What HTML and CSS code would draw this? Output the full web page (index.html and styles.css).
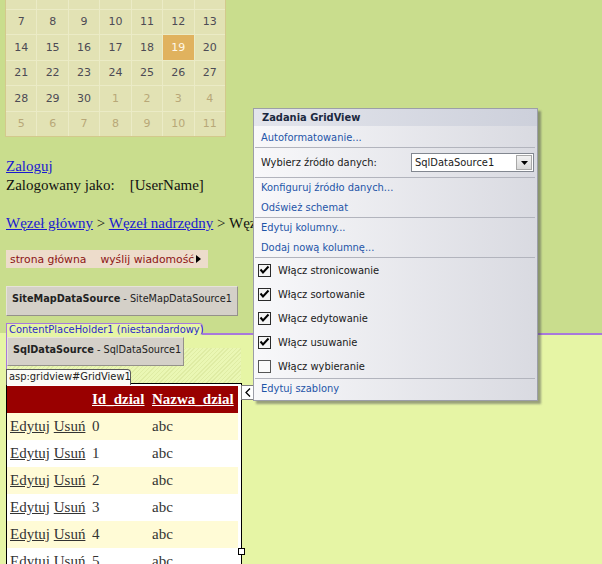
FILE: index.html
```html
<!DOCTYPE html>
<html lang="pl">
<head>
<meta charset="utf-8">
<title>GridView designer</title>
<link rel="stylesheet" href="styles.css">
</head>
<body>
<div class="upper">
  <div class="calendar">
    <div class="cal-grid">
      <span class="d o">31</span><span class="d">1</span><span class="d">2</span><span class="d">3</span><span class="d">4</span><span class="d">5</span><span class="d">6</span>
      <span class="d">7</span><span class="d">8</span><span class="d">9</span><span class="d">10</span><span class="d">11</span><span class="d">12</span><span class="d">13</span>
      <span class="d">14</span><span class="d">15</span><span class="d">16</span><span class="d">17</span><span class="d">18</span><span class="d sel">19</span><span class="d">20</span>
      <span class="d">21</span><span class="d">22</span><span class="d">23</span><span class="d">24</span><span class="d">25</span><span class="d">26</span><span class="d">27</span>
      <span class="d">28</span><span class="d">29</span><span class="d">30</span><span class="d o">1</span><span class="d o">2</span><span class="d o">3</span><span class="d o">4</span>
      <span class="d o">5</span><span class="d o">6</span><span class="d o">7</span><span class="d o">8</span><span class="d o">9</span><span class="d o">10</span><span class="d o">11</span>
    </div>
  </div>
  <div class="login">
    <div><a class="lnk" href="#">Zaloguj</a></div>
    <div class="who"><span>Zalogowany jako:</span><span class="uname">[UserName]</span></div>
  </div>
  <div class="crumbs"><a class="lnk" href="#">Węzeł główny</a> &gt; <a class="lnk" href="#">Węzeł nadrzędny</a> &gt; Węzeł bieżący</div>
  <div class="menu"><span>strona główna</span><span class="m2">wyślij wiadomość</span><span class="m-arrow"></span></div>
  <div class="ctl sitemap"><b>SiteMapDataSource</b> - SiteMapDataSource1</div>
  <div class="cph-tab">ContentPlaceHolder1 (niestandardowy)</div>
</div>
<div class="lower">
  <div class="cph">
    <div class="sql-row">
      <div class="ctl sql"><b>SqlDataSource</b> - SqlDataSource1</div>
      <div class="hatch hatch-fill"></div>
    </div>
    <div class="hatch gv-band"><span class="gv-label">asp:gridview#GridView1</span></div>
    <div class="gv-frame">
      <table class="grid">
        <colgroup><col class="c1"><col class="c2"><col class="c3"></colgroup>
        <thead>
          <tr><th></th><th><a href="#">Id_dzial</a></th><th><a href="#">Nazwa_dzial</a></th></tr>
        </thead>
        <tbody>
          <tr class="alt"><td><a href="#">Edytuj</a> <a href="#">Usuń</a></td><td>0</td><td>abc</td></tr>
          <tr><td><a href="#">Edytuj</a> <a href="#">Usuń</a></td><td>1</td><td>abc</td></tr>
          <tr class="alt"><td><a href="#">Edytuj</a> <a href="#">Usuń</a></td><td>2</td><td>abc</td></tr>
          <tr><td><a href="#">Edytuj</a> <a href="#">Usuń</a></td><td>3</td><td>abc</td></tr>
          <tr class="alt"><td><a href="#">Edytuj</a> <a href="#">Usuń</a></td><td>4</td><td>abc</td></tr>
          <tr><td><a href="#">Edytuj</a> <a href="#">Usuń</a></td><td>5</td><td>abc</td></tr>
        </tbody>
      </table>
    </div>
  </div>
</div>

<div class="smart-tag"><svg width="6" height="9" viewBox="0 0 6 9"><path d="M5 0.5 L1 4.5 L5 8.5" fill="none" stroke="#000" stroke-width="1.3"/></svg></div>
<div class="handle"></div>

<div class="tasks">
  <div class="t-title">Zadania GridView</div>
  <div class="t-item t-first"><a href="#">Autoformatowanie...</a></div>
  <div class="t-sep"></div>
  <div class="t-row">
    <span class="t-label">Wybierz źródło danych:</span>
    <div class="select"><span class="sel-text">SqlDataSource1</span><span class="sel-btn"><svg width="7" height="4" viewBox="0 0 7 4"><path d="M0 0 H7 L3.5 4 Z" fill="#000"/></svg></span></div>
  </div>
  <div class="t-sep"></div>
  <div class="t-item"><a href="#">Konfiguruj źródło danych...</a></div>
  <div class="t-item t-short"><a href="#">Odśwież schemat</a></div>
  <div class="t-sep"></div>
  <div class="t-item"><a href="#">Edytuj kolumny...</a></div>
  <div class="t-item t-short"><a href="#">Dodaj nową kolumnę...</a></div>
  <div class="t-sep"></div>
  <div class="t-check"><svg class="cb" width="13" height="13" viewBox="0 0 13 13"><rect x="0.5" y="0.5" width="12" height="12" fill="#f4f4f4" stroke="#2a2a2a"/><path d="M2.5 5.5 L5 8.5 L10.5 2.5" fill="none" stroke="#000" stroke-width="2"/></svg><span>Włącz stronicowanie</span></div>
  <div class="t-check"><svg class="cb" width="13" height="13" viewBox="0 0 13 13"><rect x="0.5" y="0.5" width="12" height="12" fill="#f4f4f4" stroke="#2a2a2a"/><path d="M2.5 5.5 L5 8.5 L10.5 2.5" fill="none" stroke="#000" stroke-width="2"/></svg><span>Włącz sortowanie</span></div>
  <div class="t-check"><svg class="cb" width="13" height="13" viewBox="0 0 13 13"><rect x="0.5" y="0.5" width="12" height="12" fill="#f4f4f4" stroke="#2a2a2a"/><path d="M2.5 5.5 L5 8.5 L10.5 2.5" fill="none" stroke="#000" stroke-width="2"/></svg><span>Włącz edytowanie</span></div>
  <div class="t-check"><svg class="cb" width="13" height="13" viewBox="0 0 13 13"><rect x="0.5" y="0.5" width="12" height="12" fill="#f4f4f4" stroke="#2a2a2a"/><path d="M2.5 5.5 L5 8.5 L10.5 2.5" fill="none" stroke="#000" stroke-width="2"/></svg><span>Włącz usuwanie</span></div>
  <div class="t-check"><svg class="cb" width="13" height="13" viewBox="0 0 13 13"><rect x="0.5" y="0.5" width="12" height="12" fill="#fafafa" stroke="#555"/></svg><span>Włącz wybieranie</span></div>
  <div class="t-sep"></div>
  <div class="t-item t-last"><a href="#">Edytuj szablony</a></div>
</div>
</body>
</html>
```
FILE: styles.css
```css
* { box-sizing: border-box; }
html, body { margin: 0; padding: 0; }
body {
  width: 602px;
  height: 564px;
  overflow: hidden;
  position: relative;
  background: #e6f5a5;
  font-family: "Liberation Serif", "Times New Roman", serif;
  color: #111;
}

/* ---------- upper (master page) ---------- */
.upper {
  display: flow-root;
  background: #c9dd8d;
}

.calendar {
  margin: -17px 0 0 5px;
  width: 221px;
  border: 1px solid #d3c98c;
  background: #ebebc6;
}
.cal-grid {
  display: grid;
  grid-template-columns: repeat(7, 1fr);
  grid-template-rows: repeat(6, 24.5px);
  gap: 1px;
}
.d {
  background: #e2e2b4;
  display: flex;
  align-items: center;
  justify-content: center;
  font-family: "DejaVu Sans", Verdana, sans-serif;
  font-size: 11px;
  color: #4d4b55;
}
.d.o { color: #b8a878; }
.d.sel { background: #e0b25e; color: #fff8e8; }

.login {
  margin: 20px 0 0 6px;
  font-size: 15px;
  line-height: 19px;
}
.lnk { color: #1a1ad0; text-decoration: underline; }
.who { display: flex; }
.uname { margin-left: 15px; }

.crumbs {
  margin: 19px 0 0 6px;
  width: 247px;
  overflow: hidden;
  font-size: 15px;
  line-height: 19px;
  white-space: nowrap;
}

.menu {
  margin: 17px 0 0 6px;
  width: 202px;
  height: 18px;
  background: #eddccb;
  display: flex;
  align-items: center;
  padding-left: 4px;
  font-family: "DejaVu Sans", Verdana, sans-serif;
  font-size: 10.8px;
  color: #8c1414;
}
.m2 { margin-left: 14px; }
.m-arrow {
  margin-left: 2px;
  width: 0; height: 0;
  border-top: 4px solid transparent;
  border-bottom: 4px solid transparent;
  border-left: 5px solid #000;
}

.ctl {
  background: #d4d0c8;
  border: 1px solid;
  border-color: #e6e2da #94918a #94918a #e6e2da;
  font-family: "DejaVu Sans Condensed", "Liberation Sans", sans-serif;
  font-size: 10.8px;
  color: #222;
  padding: 5px 0 0 5px;
  line-height: 13px;
  white-space: nowrap;
}
.sitemap {
  margin: 18px 0 0 6px;
  width: 232px;
  height: 30px;
}

.cph-tab {
  position: relative;
  z-index: 2;
  margin: 7px 0 -2px 6px;
  width: 197px;
  height: 12px;
  border: 1px solid #a878dc;
  border-bottom: none;
  border-top-right-radius: 4px;
  background: #e6f5a5;
  font-family: "DejaVu Sans Condensed", "Liberation Sans", sans-serif;
  font-size: 11px;
  line-height: 11px;
  color: #2a2ac8;
  padding-left: 2px;
  white-space: nowrap;
}

/* ---------- lower (content placeholder) ---------- */
.lower { padding-left: 6px; }
.cph {
  border-left: 1px solid #a878dc;
  border-top: 2px solid #a878dc;
  height: 240px;
}

.hatch {
  background: repeating-linear-gradient(-45deg, #dfeca4 0 1px, #eaf7b4 1px 3px);
}
.sql-row {
  display: flex;
  width: 234px;
  margin-top: 2px;
}
.sql {
  width: 177px;
  height: 29px;
}
.hatch-fill {
  flex: 1;
  margin-top: 11px;
}
.gv-band {
  width: 234px;
  height: 17px;
}
.gv-label {
  display: inline-block;
  margin: 1px 0 0 -1px;
  height: 16px;
  width: 125px;
  border: 1px solid #5a5a5a;
  border-bottom: none;
  border-top-right-radius: 4px;
  background: #fbfbf6;
  font-family: "DejaVu Sans Condensed", "Liberation Sans", sans-serif;
  font-size: 11px;
  line-height: 14px;
  color: #222;
  padding-left: 2px;
  white-space: nowrap;
}

.gv-frame {
  margin-left: -1px;
  width: 236px;
  height: 200px;
  border: 1px solid #000;
  border-bottom: none;
  padding-top: 2px;
  background: #fff;
}
.grid {
  width: 231px;
  border-collapse: collapse;
  font-size: 15px;
  color: #333;
}
.grid .c1 { width: 81px; }
.grid .c2 { width: 60px; }
.grid .c3 { width: 90px; }
.grid th, .grid td {
  height: 27px;
  padding: 0 0 0 4px;
  text-align: left;
  white-space: nowrap;
}
.grid td:first-child { padding-left: 3px; }
.grid thead tr { background: #990000; }
.grid th a { color: #fff; font-weight: bold; text-decoration: underline; }
.grid td a { color: #333; text-decoration: underline; }
.grid tbody tr { background: #fff; }
.grid tbody tr.alt { background: #fffbd6; }

.smart-tag {
  position: absolute;
  left: 241px;
  top: 385px;
  width: 13px;
  height: 15px;
  background: #fff;
  border: 1px solid #7d7d7d;
  display: flex;
  align-items: center;
  justify-content: center;
}
.handle {
  position: absolute;
  left: 238px;
  top: 548px;
  width: 7px;
  height: 7px;
  background: #fff;
  border: 1px solid #000;
}

/* ---------- smart tag panel ---------- */
.tasks {
  position: absolute;
  left: 253px;
  top: 108px;
  width: 285px;
  border: 1px solid #9c9ea8;
  background: linear-gradient(to right, #f8f8fa, #d9dae1);
  box-shadow: 3px 3px 2px rgba(60, 60, 70, 0.45);
  font-family: "DejaVu Sans Condensed", "Liberation Sans", sans-serif;
  font-size: 11px;
  color: #1a1a1a;
  padding-bottom: 1px;
}
.tasks a { color: #1f55a8; text-decoration: none; }
.t-title {
  height: 17px;
  line-height: 17px;
  padding-left: 8px;
  font-weight: bold;
  color: #1b2840;
  background: linear-gradient(to right, #e3e5ec, #cdd0db);
}
.t-item {
  height: 20px;
  line-height: 20px;
  padding-left: 7px;
  white-space: nowrap;
}
.t-first { height: 21px; line-height: 24px; }
.t-short { height: 19px; }
.t-last { height: 20px; line-height: 19px; }
.t-sep {
  height: 1px;
  margin: 0 2px 0 1px;
  background: #b2b4bd;
}
.t-row {
  height: 29px;
  display: flex;
  align-items: center;
  padding-left: 7px;
}
.t-label { width: 150px; white-space: nowrap; }
.select {
  margin-left: 0;
  width: 123px;
  height: 19px;
  background: #fff;
  border: 1px solid #828790;
  display: flex;
  align-items: center;
  padding-left: 3px;
}
.sel-text { flex: 1; white-space: nowrap; }
.sel-btn {
  width: 16px;
  height: 15px;
  margin-right: 1px;
  background: linear-gradient(#f2f2f2, #d8d8d8);
  border: 1px solid #a8a8a8;
  display: flex;
  align-items: center;
  justify-content: center;
}
.t-check {
  height: 24px;
  display: flex;
  align-items: center;
  padding-left: 4px;
  white-space: nowrap;
}
.t-check .cb { flex: none; margin-right: 7px; }
```
